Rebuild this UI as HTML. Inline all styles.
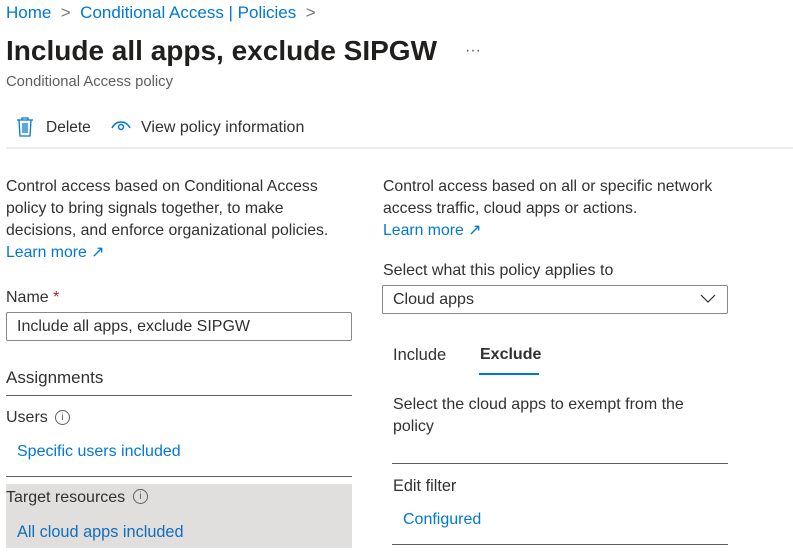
<!DOCTYPE html>
<html><head><meta charset="utf-8"><style>
body{margin:0;width:793px;height:556px;overflow:hidden;background:#fff;font-family:"Liberation Sans",sans-serif;color:#323130;position:relative}
.a{position:absolute;white-space:nowrap}
.l{color:#0078d4}
.p{font-size:15.8px;line-height:22px}
.f{font-size:16px}
</style></head><body>
<div class="a l" style="left:6px;top:3px;font-size:17px">Home <span style="color:#777">&nbsp;&gt;&nbsp;</span> Conditional Access | Policies <span style="color:#777">&nbsp;&gt;</span></div>
<div class="a" style="left:6px;top:35px;font-size:28px;font-weight:bold;color:#201f1e">Include all apps, exclude SIPGW</div>
<div class="a" style="left:465px;top:42px;font-size:16px;color:#605e5c">···</div>
<div class="a" style="left:6px;top:74px;font-size:14.8px;color:#605e5c">Conditional Access policy</div>
<svg class="a" style="left:16px;top:117px" width="18" height="20" viewBox="0 0 18 20"><path d="M1 3h16M6 3V1h6v2M3 3l1 16h10l1-16M7 6v10M9 6v10M11 6v10" fill="none" stroke="#0078d4" stroke-width="1.3"/></svg>
<div class="a" style="left:46px;top:119px;font-size:15.5px">Delete</div>
<svg class="a" style="left:110px;top:118px" width="22" height="14" viewBox="0 0 22 14"><path d="M2 10C6 2 16 2 20 10" fill="none" stroke="#0078d4" stroke-width="1.5"/><circle cx="11" cy="9" r="2.5" fill="none" stroke="#0078d4" stroke-width="1.5"/></svg>
<div class="a f" style="left:141px;top:119px">View policy information</div>
<div class="a" style="left:6px;top:147px;width:787px;height:2px;background:#edebe9"></div>

<div class="a p" style="left:6px;top:176px">Control access based on Conditional Access<br>policy to bring signals together, to make<br>decisions, and enforce organizational policies.<br><span class="l">Learn more ↗</span></div>
<div class="a f" style="left:6px;top:289px">Name <span style="color:#a4262c">*</span></div>
<div class="a" style="left:6px;top:312px;width:344px;height:27px;border:1px solid #8a8886;border-radius:2px"></div>
<div class="a f" style="left:17px;top:318px">Include all apps, exclude SIPGW</div>
<div class="a" style="left:6px;top:368px;font-size:17px">Assignments</div>
<div class="a" style="left:6px;top:395px;width:346px;height:1px;background:#605e5c"></div>
<div class="a f" style="left:6px;top:409px">Users</div>
<div class="a" style="left:55px;top:410px;width:13px;height:13px;border:1px solid #605e5c;border-radius:50%;font-size:10px;text-align:center;line-height:13px;color:#605e5c">i</div>
<div class="a l f" style="left:17px;top:443px">Specific users included</div>
<div class="a" style="left:6px;top:476px;width:346px;height:1px;background:#605e5c"></div>
<div class="a" style="left:6px;top:484px;width:346px;height:64px;background:#e1dfdd"></div>
<div class="a f" style="left:6px;top:489px">Target resources</div>
<div class="a" style="left:133px;top:489px;width:13px;height:13px;border:1px solid #605e5c;border-radius:50%;font-size:10px;text-align:center;line-height:13px;color:#605e5c">i</div>
<div class="a l" style="left:17px;top:523px;font-size:16.3px;color:#106ebe">All cloud apps included</div>

<div class="a p" style="left:383px;top:176px">Control access based on all or specific network<br>access traffic, cloud apps or actions.<br><span class="l">Learn more ↗</span></div>
<div class="a f" style="left:383px;top:262px">Select what this policy applies to</div>
<div class="a" style="left:382px;top:285px;width:344px;height:27px;border:1px solid #8a8886;border-radius:2px"></div>
<div class="a f" style="left:393px;top:291px">Cloud apps</div>
<svg class="a" style="left:700px;top:294px" width="16" height="10"><path d="M1 1l7 7 7-7" fill="none" stroke="#323130" stroke-width="1.2"/></svg>
<div class="a" style="left:393px;top:346px;font-size:16.5px">Include</div>
<div class="a" style="left:480px;top:346px;font-size:16px;font-weight:bold">Exclude</div>
<div class="a" style="left:479px;top:373px;width:60px;height:2px;background:#0078d4"></div>
<div class="a f" style="left:393px;top:394px;line-height:22px">Select the cloud apps to exempt from the<br>policy</div>
<div class="a" style="left:392px;top:463px;width:336px;height:1px;background:#605e5c"></div>
<div class="a" style="left:393px;top:477px;font-size:16.3px">Edit filter</div>
<div class="a l f" style="left:403px;top:511px">Configured</div>
<div class="a" style="left:392px;top:544px;width:336px;height:1px;background:#605e5c"></div>
</body></html>
